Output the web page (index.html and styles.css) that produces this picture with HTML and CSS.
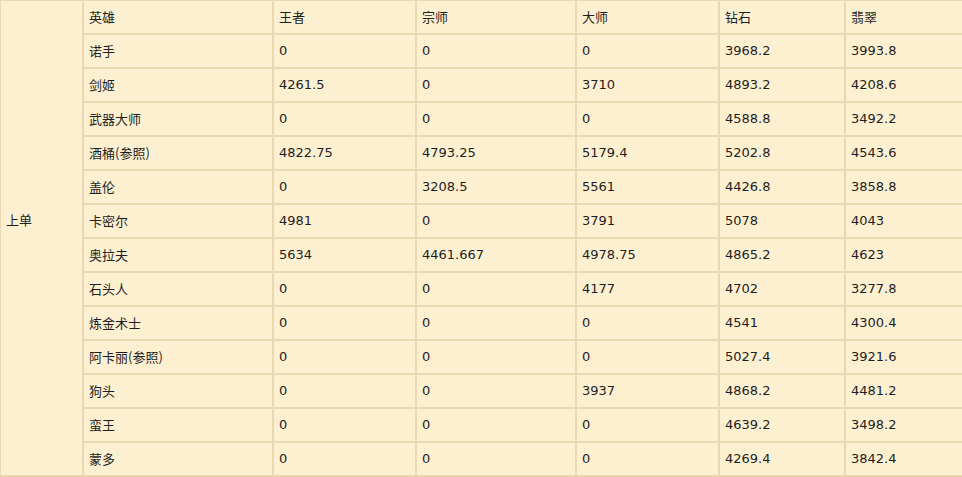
FILE: index.html
```html
<!DOCTYPE html>
<html lang="zh">
<head>
<meta charset="utf-8">
<title>上单</title>
<link rel="stylesheet" href="styles.css">
</head>
<body>
<div class="wrap">
<table class="stats">
<colgroup>
<col class="c-pos"><col class="c-hero"><col class="c-a"><col class="c-b"><col class="c-c"><col class="c-d"><col class="c-e">
</colgroup>
<tbody>
<tr><td class="pos" rowspan="14">上单</td><td>英雄</td><td>王者</td><td>宗师</td><td>大师</td><td>钻石</td><td>翡翠</td></tr>
<tr><td>诺手</td><td class="n">0</td><td class="n">0</td><td class="n">0</td><td class="n">3968.2</td><td class="n">3993.8</td></tr>
<tr><td>剑姬</td><td class="n">4261.5</td><td class="n">0</td><td class="n">3710</td><td class="n">4893.2</td><td class="n">4208.6</td></tr>
<tr><td>武器大师</td><td class="n">0</td><td class="n">0</td><td class="n">0</td><td class="n">4588.8</td><td class="n">3492.2</td></tr>
<tr><td>酒桶(参照)</td><td class="n">4822.75</td><td class="n">4793.25</td><td class="n">5179.4</td><td class="n">5202.8</td><td class="n">4543.6</td></tr>
<tr><td>盖伦</td><td class="n">0</td><td class="n">3208.5</td><td class="n">5561</td><td class="n">4426.8</td><td class="n">3858.8</td></tr>
<tr><td>卡密尔</td><td class="n">4981</td><td class="n">0</td><td class="n">3791</td><td class="n">5078</td><td class="n">4043</td></tr>
<tr><td>奥拉夫</td><td class="n">5634</td><td class="n">4461.667</td><td class="n">4978.75</td><td class="n">4865.2</td><td class="n">4623</td></tr>
<tr><td>石头人</td><td class="n">0</td><td class="n">0</td><td class="n">4177</td><td class="n">4702</td><td class="n">3277.8</td></tr>
<tr><td>炼金术士</td><td class="n">0</td><td class="n">0</td><td class="n">0</td><td class="n">4541</td><td class="n">4300.4</td></tr>
<tr><td>阿卡丽(参照)</td><td class="n">0</td><td class="n">0</td><td class="n">0</td><td class="n">5027.4</td><td class="n">3921.6</td></tr>
<tr><td>狗头</td><td class="n">0</td><td class="n">0</td><td class="n">3937</td><td class="n">4868.2</td><td class="n">4481.2</td></tr>
<tr><td>蛮王</td><td class="n">0</td><td class="n">0</td><td class="n">0</td><td class="n">4639.2</td><td class="n">3498.2</td></tr>
<tr><td>蒙多</td><td class="n">0</td><td class="n">0</td><td class="n">0</td><td class="n">4269.4</td><td class="n">3842.4</td></tr>
</tbody>
</table>
</div>
</body>
</html>
```

FILE: styles.css
```css
html, body {
  margin: 0;
  padding: 0;
  background: #e9d0a6;
  overflow: hidden;
}

.wrap {
  width: 962px;
  height: 476px;
  overflow: hidden;
  background: #fdf0d1;
}

.stats {
  border-collapse: separate;
  border-spacing: 0;
  table-layout: fixed;
  width: 975px;
  font-family: "DejaVu Sans", "Noto Sans CJK SC", sans-serif;
  font-size: 13px;
  color: #1e1e1e;
}

.c-pos { width: 83px; }
.c-hero { width: 190px; }
.c-a { width: 143px; }
.c-b { width: 160px; }
.c-c { width: 143px; }
.c-d { width: 126px; }
.c-e { width: 130px; }

.stats tr {
  height: 34px;
}

.stats td {
  border: 1px solid #ead8b2;
  padding: 0 5px;
  line-height: 16px;
  vertical-align: middle;
  text-align: left;
  white-space: nowrap;
  font-family: "Noto Sans CJK SC", "DejaVu Sans", sans-serif;
  font-size: 13px;
}

.stats td.n {
  font-family: "DejaVu Sans", sans-serif;
  font-size: 13px;
}

.stats td.pos {
  padding-left: 5px;
  padding-bottom: 36px;
}
```
